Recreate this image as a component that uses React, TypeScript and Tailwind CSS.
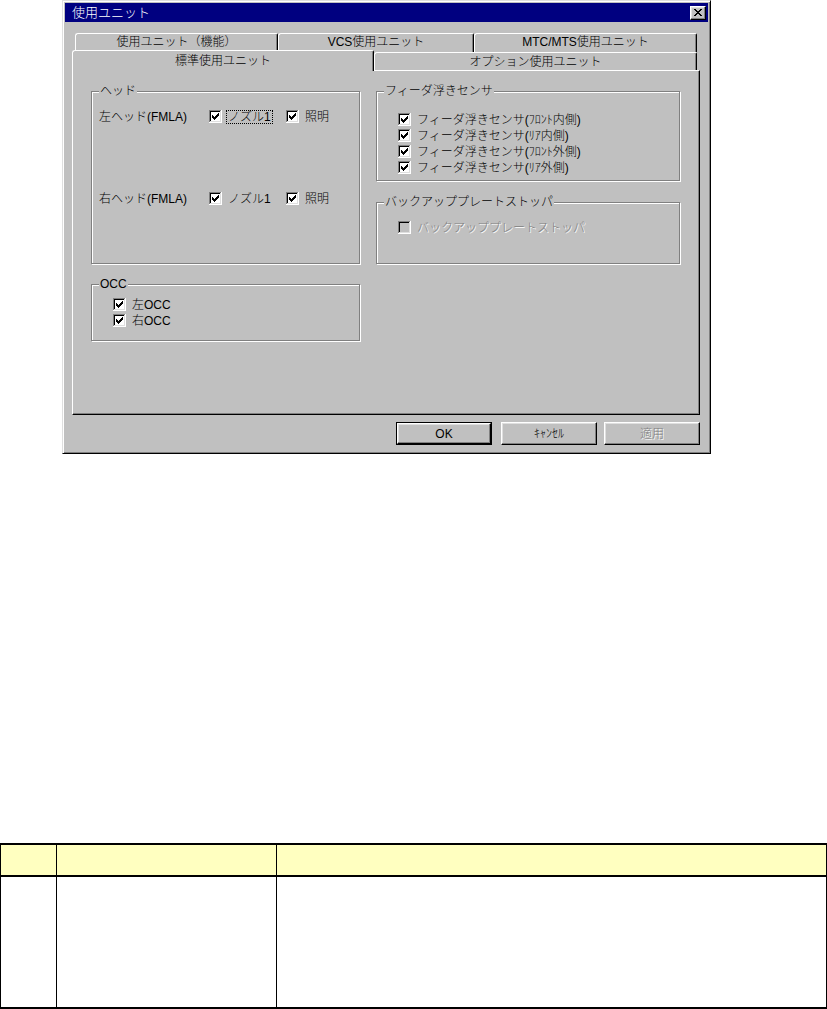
import React from "react";

const FONT = "font-['Liberation_Sans','Noto_Sans_CJK_JP',sans-serif] font-light";

function CheckBox({ checked = true, disabled = false }: { checked?: boolean; disabled?: boolean }) {
  return (
    <svg width="13" height="13" viewBox="0 0 13 13" shapeRendering="crispEdges" className="shrink-0 block">
      <rect x="0" y="0" width="13" height="13" fill="#ffffff" />
      <path d="M0 0h12v1H1v11H0z" fill="#808080" />
      <path d="M1 1h10v1H2v9H1z" fill="#000000" />
      <path d="M11 1h1v11H1v-1h10z" fill="#dfdfdf" />
      <rect x="2" y="2" width="9" height="9" fill={disabled ? "#c0c0c0" : "#ffffff"} />
      {checked && (
        <path
          d="M3 5h1v3H3z M4 6h1v3H4z M5 7h1v3H5z M6 6h1v3H6z M7 5h1v3H7z M8 4h1v3H8z M9 3h1v3H9z"
          fill="#000000"
        />
      )}
    </svg>
  );
}

function CheckRow({
  label,
  checked = true,
  disabled = false,
  focus = false,
}: {
  label: string;
  checked?: boolean;
  disabled?: boolean;
  focus?: boolean;
}) {
  return (
    <div className="flex h-[13px] items-center">
      <CheckBox checked={checked} disabled={disabled} />
      <span
        className={`ml-[4px] px-[1px] border leading-[12px] whitespace-nowrap ${
          focus ? "border-dotted border-black" : "border-transparent"
        } ${disabled ? "text-[#808080] [text-shadow:1px_1px_0_#ffffff]" : "text-black"}`}
      >
        {label}
      </span>
    </div>
  );
}

function Group({
  label,
  className,
  children,
}: {
  label: string;
  className: string;
  children?: React.ReactNode;
}) {
  return (
    <div
      className={`relative border border-[#808080] shadow-[inset_1px_1px_0_#ffffff,1px_1px_0_#ffffff] ${className}`}
    >
      <span className="absolute left-[7px] -top-[8px] bg-[#c0c0c0] px-[1px] leading-[14px] whitespace-nowrap">
        {label}
      </span>
      {children}
    </div>
  );
}

const raised =
  "border border-t-white border-l-white border-r-black border-b-black shadow-[inset_-1px_-1px_0_#808080,inset_1px_1px_0_#dfdfdf]";

const tabBase =
  "flex items-center justify-center border-t border-l border-r border-t-white border-l-white border-r-black rounded-tl-[3px] rounded-tr-[2px] shadow-[inset_-1px_0_0_#808080] bg-[#c0c0c0] whitespace-nowrap";

export default function App() {
  return (
    <div className={`w-[827px] h-[1009px] bg-white overflow-hidden text-[12px] text-black ${FONT}`}>
      {/* Dialog */}
      <div
        className="ml-[62px] w-[649px] h-[454px] bg-[#c0c0c0] border border-t-[#dfdfdf] border-l-[#dfdfdf] border-r-black border-b-black shadow-[inset_1px_1px_0_#ffffff,inset_-1px_-1px_0_#808080] p-[2px] flex flex-col"
      >
        {/* Title bar */}
        <div className="h-[19px] bg-[#000080] flex items-center justify-between">
          <span className="pl-[7px] text-white leading-[14px] text-[13px]">使用ユニット</span>
          <div className={`mr-[2px] w-[16px] h-[14px] bg-[#c0c0c0] flex items-center justify-center ${raised}`}>
            <svg width="8" height="7" viewBox="0 0 8 7" shapeRendering="crispEdges">
              <path
                d="M0 0h2v1H0z M6 0h2v1H6z M1 1h2v1H1z M5 1h2v1H5z M2 2h4v1H2z M3 3h2v1H3z M2 4h4v1H2z M1 5h2v1H1z M5 5h2v1H5z M0 6h2v1H0z M6 6h2v1H6z"
                fill="#000"
              />
            </svg>
          </div>
        </div>

        {/* Tab control */}
        <div className="mt-[11px] ml-[7px] w-[628px] flex flex-col">
          {/* Back row */}
          <div className="h-[19px] flex pl-[3px]">
            <div className={`${tabBase} w-[203px] h-[19px] pb-[2px]`}>使用ユニット（機能）</div>
            <div className={`${tabBase} w-[196px] h-[19px] pb-[2px]`}>VCS使用ユニット</div>
            <div className={`${tabBase} w-[223px] h-[19px] pb-[2px]`}>MTC/MTS使用ユニット</div>
          </div>
          {/* Front row */}
          <div className="relative z-10 -mt-[2px] h-[20px] flex items-end">
            <div className={`${tabBase} w-[302px] h-[21px] -mb-[1px] pb-[1px]`}>標準使用ユニット</div>
            <div className={`${tabBase} w-[323px] h-[18px]`}>オプション使用ユニット</div>
          </div>
          {/* Panel */}
          <div className="h-[345px] border border-t-white border-l-white border-r-black border-b-black shadow-[inset_-1px_-1px_0_#808080] pl-[18px] pt-[20px] flex gap-[16px]">
            <div className="flex flex-col gap-[20px]">
              <Group label="ヘッド" className="w-[269px] h-[173px] pl-[7px] pt-[18px]">
                <div className="flex h-[13px] items-center">
                  <span className="w-[110px] whitespace-nowrap leading-[12px]">左ヘッド(FMLA)</span>
                  <div className="w-[77px]">
                    <CheckRow label="ノズル1" focus />
                  </div>
                  <CheckRow label="照明" />
                </div>
                <div className="mt-[69px] flex h-[13px] items-center">
                  <span className="w-[110px] whitespace-nowrap leading-[12px]">右ヘッド(FMLA)</span>
                  <div className="w-[77px]">
                    <CheckRow label="ノズル1" />
                  </div>
                  <CheckRow label="照明" />
                </div>
              </Group>
              <Group label="OCC" className="w-[269px] h-[57px] pl-[21px] pt-[13px]">
                <div className="flex flex-col gap-[3px]">
                  <CheckRow label="左OCC" />
                  <CheckRow label="右OCC" />
                </div>
              </Group>
            </div>
            <div className="flex flex-col gap-[21px]">
              <Group label="フィーダ浮きセンサ" className="w-[304px] h-[90px] pl-[21px] pt-[21px]">
                <div className="flex flex-col gap-[3px]">
                  <CheckRow label="フィーダ浮きセンサ(ﾌﾛﾝﾄ内側)" />
                  <CheckRow label="フィーダ浮きセンサ(ﾘｱ内側)" />
                  <CheckRow label="フィーダ浮きセンサ(ﾌﾛﾝﾄ外側)" />
                  <CheckRow label="フィーダ浮きセンサ(ﾘｱ外側)" />
                </div>
              </Group>
              <Group label="バックアッププレートストッパ" className="w-[304px] h-[62px] pl-[21px] pt-[18px]">
                <CheckRow label="バックアッププレートストッパ" checked={false} disabled />
              </Group>
            </div>
          </div>
        </div>

        {/* Buttons */}
        <div className="mt-[7px] flex justify-end pr-[8px]">
          <div className="w-[96px] h-[23px] border border-black flex">
            <div className={`flex-1 flex items-center justify-center ${raised}`}>OK</div>
          </div>
          <div className={`ml-[9px] w-[96px] h-[23px] flex items-center justify-center ${raised}`}>ｷｬﾝｾﾙ</div>
          <div
            className={`ml-[7px] w-[96px] h-[23px] flex items-center justify-center text-[#808080] [text-shadow:1px_1px_0_#ffffff] ${raised}`}
          >
            適用
          </div>
        </div>
      </div>

      {/* Table */}
      <div className="mt-[389px] w-[827px] border-t-2 border-b-2 border-l border-r border-black">
        <div className="flex h-[32px] bg-[#ffffc0] border-b-2 border-black">
          <div className="w-[56px] border-r border-black" />
          <div className="w-[220px] border-r border-black" />
          <div className="flex-1" />
        </div>
        <div className="flex h-[130px] bg-white">
          <div className="w-[56px] border-r border-black" />
          <div className="w-[220px] border-r border-black" />
          <div className="flex-1" />
        </div>
      </div>
    </div>
  );
}
